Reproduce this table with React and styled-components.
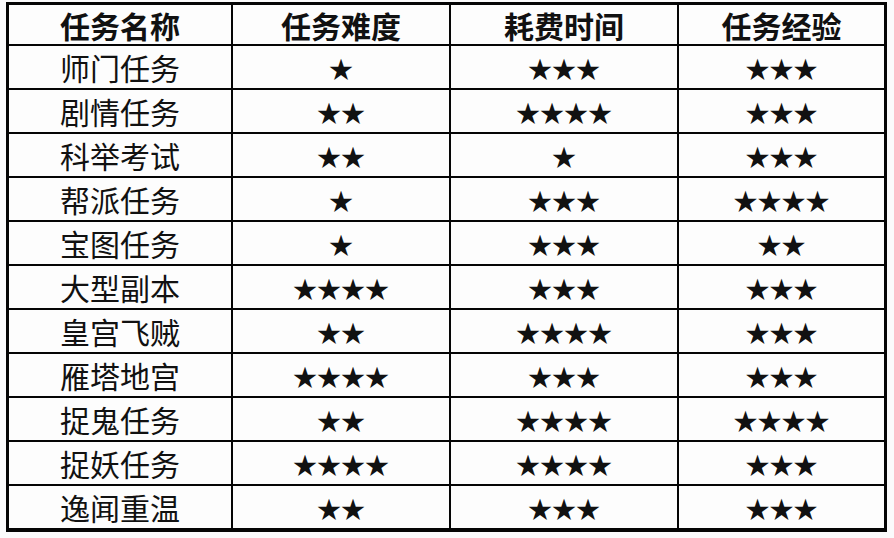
import React from 'react';
import styled, { createGlobalStyle } from 'styled-components';

const GlobalStyle = createGlobalStyle`
  html, body {
    margin: 0;
    padding: 0;
    background: #fbfbfc;
  }
  body {
    font-family: "Noto Sans CJK SC", "Noto Sans", sans-serif;
    color: #111;
  }
`;

const Page = styled.div`
  width: 894px;
  height: 538px;
  padding: 2px 0 0 6px;
  box-sizing: border-box;
  overflow: hidden;
`;

const Grid = styled.div`
  display: grid;
  grid-template-columns: 222px 216px 226px 205px;
  grid-template-rows: 39px repeat(11, 42px);
  gap: 2px;
  width: 881px;
  box-sizing: border-box;
  padding: 3px 3px 4px 3px;
  background: #050505;
`;

const Cell = styled.div`
  background: #fdfdfd;
  display: flex;
  align-items: center;
  justify-content: center;
  font-size: 30px;
  line-height: 1;
  font-weight: ${(p) => (p.$head ? 700 : 400)};
  letter-spacing: 0;
`;

const Stars = styled(Cell)`
  font-size: 24px;
  padding-top: 2px;
`;

const head = ['任务名称', '任务难度', '耗费时间', '任务经验'];

const rows = [
  ['师门任务', 1, 3, 3],
  ['剧情任务', 2, 4, 3],
  ['科举考试', 2, 1, 3],
  ['帮派任务', 1, 3, 4],
  ['宝图任务', 1, 3, 2],
  ['大型副本', 4, 3, 3],
  ['皇宫飞贼', 2, 4, 3],
  ['雁塔地宫', 4, 3, 3],
  ['捉鬼任务', 2, 4, 4],
  ['捉妖任务', 4, 4, 3],
  ['逸闻重温', 2, 3, 3],
];

export default function App() {
  return (
    <>
      <GlobalStyle />
      <Page>
        <Grid>
          {head.map((h) => (
            <Cell key={h} $head>{h}</Cell>
          ))}
          {rows.map(([name, a, b, c]) => (
            <React.Fragment key={name}>
              <Cell>{name}</Cell>
              <Stars>{'★'.repeat(a)}</Stars>
              <Stars>{'★'.repeat(b)}</Stars>
              <Stars>{'★'.repeat(c)}</Stars>
            </React.Fragment>
          ))}
        </Grid>
      </Page>
    </>
  );
}
